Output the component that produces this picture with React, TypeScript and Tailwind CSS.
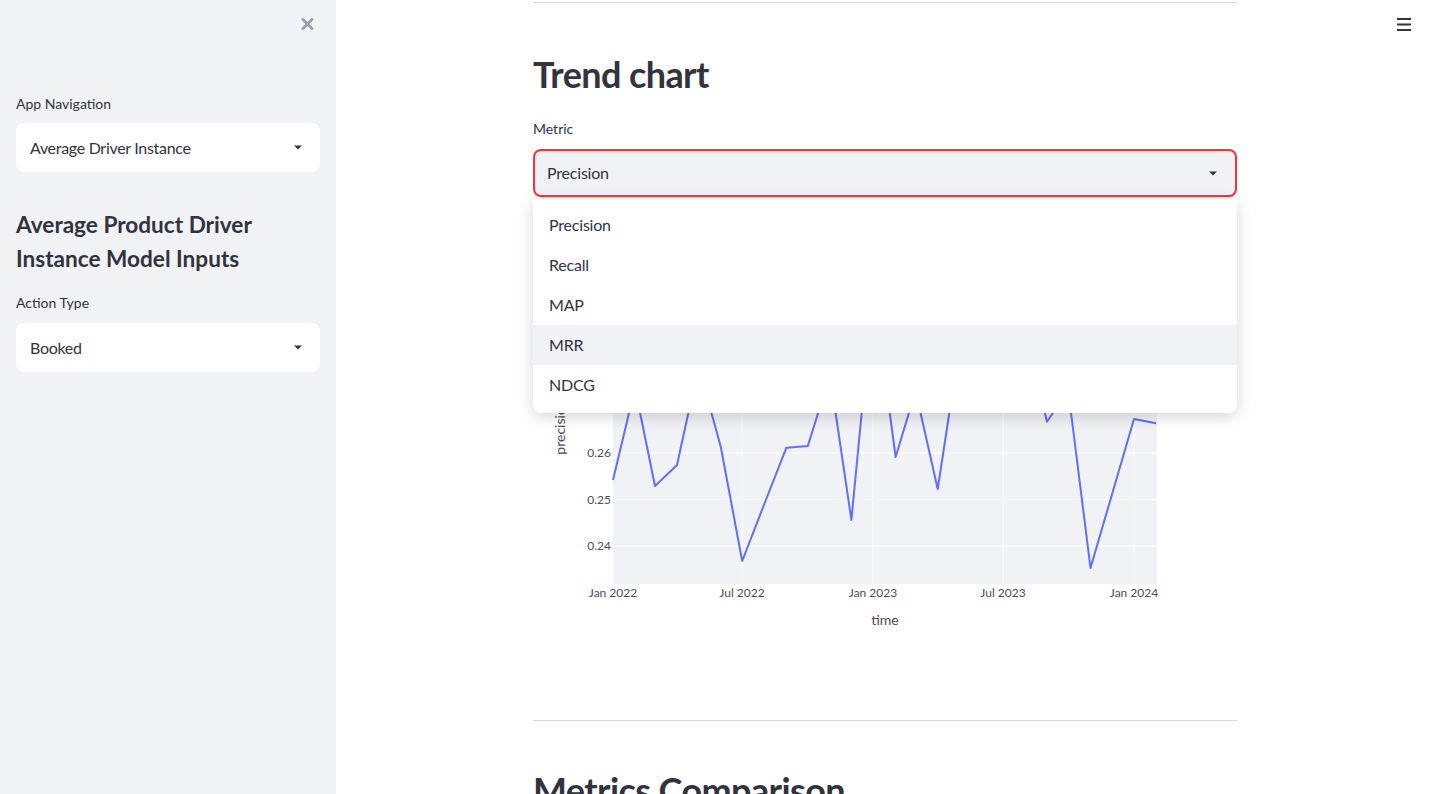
import React from "react";

const pts: [number, number][] = [
  [80, 266], [102, 174], [122, 272], [144, 251], [165.6, 152], [187.8, 233],
  [209.2, 347], [231.3, 290], [253.4, 233.7], [274.8, 232], [297, 161], [318.4, 306],
  [340.5, 76], [362.6, 243], [382.6, 177], [404.7, 275], [426.1, 135], [448.3, 120],
  [469.7, 150], [491.8, 110], [513.9, 207.7], [535.3, 177], [557.5, 354], [578.9, 280.7],
  [601, 205], [623.1, 209.3],
];

function Caret() {
  return (
    <svg width="8" height="5" viewBox="0 0 8 5" className="shrink-0">
      <path d="M0 0.5H8L4 4.5Z" fill="#31333f" />
    </svg>
  );
}

function Chart() {
  const yTicks: [string, number][] = [
    ["0.24", 332],
    ["0.25", 285.5],
    ["0.26", 239],
    ["0.27", 192.5],
    ["0.28", 146],
    ["0.29", 99.5],
  ];
  const xTicks: [string, number][] = [
    ["Jan 2022", 80],
    ["Jul 2022", 209],
    ["Jan 2023", 340],
    ["Jul 2023", 470],
    ["Jan 2024", 601],
  ];
  return (
    <svg width="704" height="450" viewBox="0 0 704 450" className="mt-[17px] block shrink-0">
      <rect x="80" y="56" width="544" height="314" fill="#f0f2f6" />
      {xTicks.slice(1).map(([, x]) => (
        <line key={x} x1={x} x2={x} y1="56" y2="370" stroke="#ffffff" strokeWidth="1" />
      ))}
      {yTicks.map(([, y]) => (
        <line key={y} x1="80" x2="624" y1={y} y2={y} stroke="#ffffff" strokeWidth="1" />
      ))}
      <polyline
        points={pts.map((p) => p.join(",")).join(" ")}
        fill="none"
        stroke="#636efa"
        strokeWidth="2"
        strokeLinejoin="round"
      />
      {yTicks.map(([t, y]) => (
        <text key={t} x="78" y={y + 4} textAnchor="end" fontSize="12" fill="#4b4d58">
          {t}
        </text>
      ))}
      {xTicks.map(([t, x]) => (
        <text key={t} x={x} y="383" textAnchor="middle" fontSize="12" fill="#4b4d58">
          {t}
        </text>
      ))}
      <text x="352" y="411" textAnchor="middle" fontSize="14" fill="#4b4d58">
        time
      </text>
      <text transform="translate(32,213) rotate(-90)" textAnchor="middle" fontSize="14" fill="#4b4d58">
        precision
      </text>
    </svg>
  );
}

export default function App() {
  const options = ["Precision", "Recall", "MAP", "MRR", "NDCG"];
  return (
    <div className="flex h-[794px] w-[1440px] overflow-hidden bg-white font-['Lato','Noto_Sans',sans-serif] text-[#31333f]">
      <aside className="flex w-[336px] shrink-0 flex-col bg-[#f0f2f6] px-4">
        <div className="flex h-[48px] items-start justify-end pr-[6px] pt-[18px]">
          <svg width="13" height="12" viewBox="0 0 13 12">
            <path d="M2 1.5L11 10.5M11 1.5L2 10.5" stroke="#9b9da8" strokeWidth="2.8" strokeLinecap="round" />
          </svg>
        </div>
        <div className="mt-[46px] h-5 text-[14px] leading-5">App Navigation</div>
        <div className="mt-[9px] flex h-[49px] items-center justify-between rounded-lg bg-white pl-[14px] pr-[18px] text-[16px] tracking-[-0.3px]">
          <span>Average Driver Instance</span>
          <Caret />
        </div>
        <h2 className="mt-[36px] text-[22.6px] font-bold leading-[33.5px]">
          Average Product Driver Instance Model Inputs
        </h2>
        <div className="mt-[18px] h-5 text-[14px] leading-5">Action Type</div>
        <div className="mt-[10px] flex h-[49px] items-center justify-between rounded-lg bg-white pl-[14px] pr-[18px] text-[16px] tracking-[-0.3px]">
          <span>Booked</span>
          <Caret />
        </div>
      </aside>

      <main className="relative flex-1">
        <div className="absolute right-[29px] top-[18px]">
          <svg width="14" height="13" viewBox="0 0 14 13">
            <path d="M0 1H14M0 6.5H14M0 12H14" stroke="#31333f" strokeWidth="1.8" />
          </svg>
        </div>
        <div className="ml-[197px] flex w-[704px] flex-col">
          <div className="mt-[2px] h-px bg-[#d6d7db]" />
          <h2 className="mt-[49px] text-[36px] font-bold leading-[44px] tracking-[-0.6px]">Trend chart</h2>
          <div className="mt-[23px] h-5 text-[14px] leading-5">Metric</div>
          <div className="relative z-10 mt-[10px]">
            <div className="flex h-[48px] items-center justify-between rounded-lg border-2 border-[#f5333f] bg-[#f0f2f6] pl-[12px] pr-[18px] text-[16px] tracking-[-0.2px]">
              <span>Precision</span>
              <Caret />
            </div>
            <div className="absolute left-0 right-0 top-[calc(100%+2px)] rounded-b-lg bg-white pb-[8px] pt-[6px] shadow-[0_4px_16px_rgba(0,0,0,0.16)]">
              {options.map((o) => (
                <div
                  key={o}
                  className={`flex h-[40px] items-center pl-4 text-[16px] tracking-[-0.2px] ${o === "MRR" ? "bg-[#f0f2f6]" : ""}`}
                >
                  {o}
                </div>
              ))}
            </div>
          </div>
          <Chart />
          <div className="mt-[56px] h-px bg-[#d6d7db]" />
          <h2 className="mt-[47px] text-[36px] font-bold leading-[44px] tracking-[-0.6px]">Metrics Comparison</h2>
        </div>
      </main>
    </div>
  );
}
